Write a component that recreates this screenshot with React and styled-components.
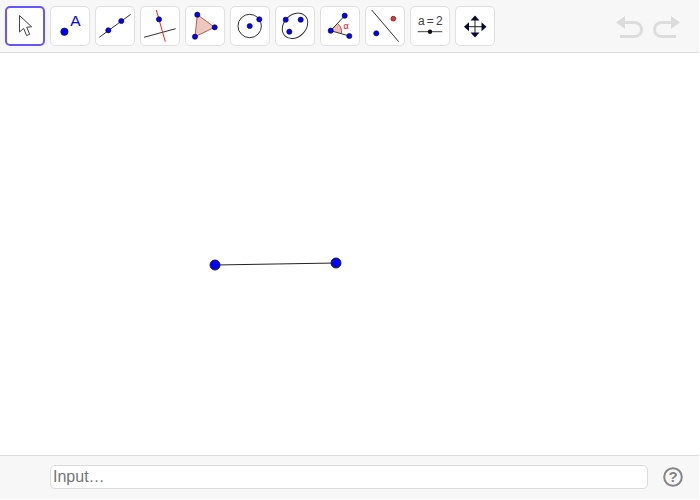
import React from "react";
import styled, { createGlobalStyle } from "styled-components";

const Global = createGlobalStyle`
  html, body { margin: 0; padding: 0; background: #fff; }
  #root { width: 699px; height: 499px; }
`;

const Shell = styled.div`
  width: 100%;
  height: 100%;
  display: flex;
  flex-direction: column;
  font-family: "Liberation Sans", Arial, sans-serif;
`;

const Toolbar = styled.header`
  height: 53px;
  box-sizing: border-box;
  flex: none;
  display: flex;
  align-items: flex-start;
  gap: 5px;
  padding: 6px 19px 0 5px;
  background: #f7f7f7;
  border-bottom: 1px solid #dcdcdc;
`;

const ToolButton = styled.button`
  width: 40px;
  height: 40px;
  flex: none;
  padding: 0;
  box-sizing: border-box;
  display: flex;
  align-items: center;
  justify-content: center;
  overflow: visible;
  background: #fff;
  border: ${(p) => (p.$active ? "2px solid #6557ff" : "1px solid #e0e0e0")};
  border-radius: 5px;
  svg { flex: none; display: block; }
`;

const History = styled.div`
  margin-left: auto;
  display: flex;
  gap: 8px;
  padding-top: 9px;
`;

const Canvas = styled.main`
  flex: 1;
  min-height: 0;
  background: #fff;
  svg { display: block; width: 100%; height: 100%; }
`;

const InputBar = styled.footer`
  height: 44px;
  box-sizing: border-box;
  flex: none;
  display: flex;
  align-items: center;
  padding: 0 16px 2px 50px;
  gap: 15px;
  background: #f7f7f7;
  border-top: 1px solid #dcdcdc;
`;

const CommandInput = styled.input`
  flex: 1;
  min-width: 0;
  height: 24px;
  box-sizing: border-box;
  padding: 0 2px;
  background: #fff;
  border: 1px solid #dcdcdc;
  border-radius: 5px;
  outline: none;
  font: 16px "Liberation Sans", Arial, sans-serif;
  &::placeholder { color: #757575; opacity: 1; }
`;

const HelpIcon = styled.svg`
  flex: none;
  display: block;
`;

const BLUE = "#0000ff";
const Dot = ({ x, y, r = 2.9, fill = BLUE }) => (
  <circle cx={x} cy={y} r={r} fill={fill} stroke="#111" strokeWidth="0.6" />
);

const Icon = ({ x, children }) => (
  <svg width="40" height="40" viewBox={`${x} 6 40 40`}>{children}</svg>
);

const Line = ({ a, b, c = "#333", w = 1 }) => (
  <line x1={a[0]} y1={a[1]} x2={b[0]} y2={b[1]} stroke={c} strokeWidth={w} />
);

const tools = [
  <Icon x={5} key="0">
    <path d="M19.5 15.5 L19.5 32 L23.6 28.3 L26.6 35.6 L29.7 34.3 L26.7 27.2 L31.6 26.8 Z" fill="#fff" stroke="#444" strokeWidth="1" strokeLinejoin="round" />
  </Icon>,
  <Icon x={50} key="1">
    <circle cx="64.4" cy="31.7" r="3.7" fill={BLUE} stroke="#111" strokeWidth="0.6" />
    <text x="75.5" y="25.5" textAnchor="middle" fontFamily="'Liberation Sans', sans-serif" fontSize="15.5" fill={BLUE}>A</text>
  </Icon>,
  <Icon x={95} key="2">
    <Line a={[99.3, 37.3]} b={[130.7, 14.3]} />
    <Dot x={108.3} y={30.3} r={2.6} />
    <Dot x={121.3} y={21} r={2.6} />
  </Icon>,
  <Icon x={140} key="3">
    <Line a={[144, 37.3]} b={[175.7, 28.7]} />
    <Line a={[156.3, 10]} b={[165.3, 41.7]} c="#f22" />
    <Dot x={159} y={19.3} r={2.6} />
  </Icon>,
  <Icon x={185} key="4">
    <polygon points="197.3,14.7 214.7,27.3 195,36.7" fill="#ecc8c0" stroke="#b5604f" strokeWidth="1" />
    <Dot x={197.3} y={14.7} r={2.6} />
    <Dot x={214.7} y={27.3} r={2.6} />
    <Dot x={195} y={36.7} r={2.6} />
  </Icon>,
  <Icon x={230} key="5">
    <circle cx="249.7" cy="26" r="11.7" fill="none" stroke="#333" strokeWidth="1" />
    <Dot x={249.7} y={26} r={2.6} />
    <Dot x={259.3} y={19.3} r={2.6} />
  </Icon>,
  <Icon x={275} key="6">
    <ellipse cx="295" cy="25.8" rx="14.2" ry="11" transform="rotate(-45 295 25.8)" fill="none" stroke="#333" strokeWidth="1" />
    <Dot x={285.7} y={19.7} r={2.6} />
    <Dot x={300.7} y={19.7} r={2.6} />
    <Dot x={289.3} y={31.7} r={2.6} />
  </Icon>,
  <Icon x={320} key="7">
    <path d="M330.7 30.7 L337.5 23.5 A11 11 0 0 1 341.5 33.5 Z" fill="#ecc0b8" stroke="none" />
    <path d="M337.5 23.5 A11 11 0 0 1 341.5 33.5" fill="none" stroke="#d44" strokeWidth="1" />
    <Line a={[330.7, 30.7]} b={[344.7, 15.7]} />
    <Line a={[330.7, 30.7]} b={[349.3, 36]} />
    <Dot x={330.7} y={30.7} r={2.6} />
    <Dot x={344.7} y={15.7} r={2.6} />
    <Dot x={349.3} y={36} r={2.6} />
    <text x="346" y="29" textAnchor="middle" fontFamily="'Liberation Sans', sans-serif" fontSize="9" fill="#f00">α</text>
  </Icon>,
  <Icon x={365} key="8">
    <Line a={[371.7, 10]} b={[398.7, 41.7]} />
    <Dot x={376.3} y={33.3} r={2.6} />
    <Dot x={393.3} y={18.7} r={2.4} fill="#f03030" />
  </Icon>,
  <Icon x={410} key="9">
    <text x="430" y="25" textAnchor="middle" fontFamily="'Liberation Sans', sans-serif" fontSize="12" letterSpacing="-0.6" fill="#444">a = 2</text>
    <Line a={[417.7, 31.7]} b={[442.3, 31.7]} c="#444" />
    <circle cx="430" cy="31.7" r="2.2" fill="#111" />
  </Icon>,
  <Icon x={455} key="10">
    <Line a={[475, 18]} b={[475, 35]} c="#222" />
    <Line a={[466, 26.7]} b={[484, 26.7]} c="#222" />
    <path d="M475 15.5 L479.5 20.5 H470.5 Z M475 37.5 L479.5 32.5 H470.5 Z M464 26.7 L469 22.2 V31.2 Z M486.5 26.7 L481.5 22.2 V31.2 Z" fill="#0a0a30" />
  </Icon>,
];

const Undo = ({ flip }) => (
  <svg width="28" height="24" viewBox="0 0 28 24" style={flip ? { transform: "scaleX(-1)" } : undefined}>
    <path d="M3 7.5 H18.5 A7 7 0 0 1 18.5 21.5 H4" fill="none" stroke="#dcdcdc" strokeWidth="3" />
    <path d="M0 7.5 L9 1 V14 Z" fill="#dcdcdc" />
  </svg>
);

export default function App() {
  return (
    <Shell>
      <Global />
      <Toolbar>
        {tools.map((t, i) => (
          <ToolButton key={i} $active={i === 0}>{t}</ToolButton>
        ))}
        <History>
          <Undo />
          <Undo flip />
        </History>
      </Toolbar>
      <Canvas>
        <svg viewBox="0 53 699 402" preserveAspectRatio="xMinYMin meet">
          <line x1="215" y1="265" x2="336" y2="263" stroke="#222" strokeWidth="1" />
          <circle cx="215" cy="265" r="5" fill={BLUE} stroke="#222" strokeWidth="1" />
          <circle cx="336" cy="263" r="5" fill={BLUE} stroke="#222" strokeWidth="1" />
        </svg>
      </Canvas>
      <InputBar>
        <CommandInput placeholder="Input…" />
        <HelpIcon width="20" height="20" viewBox="0 0 20 20">
          <circle cx="10" cy="10" r="8.8" fill="none" stroke="#858585" strokeWidth="2" />
          <text x="10" y="15.2" textAnchor="middle" fontFamily="'Liberation Sans', sans-serif" fontWeight="700" fontSize="15" fill="#858585">?</text>
        </HelpIcon>
      </InputBar>
    </Shell>
  );
}
